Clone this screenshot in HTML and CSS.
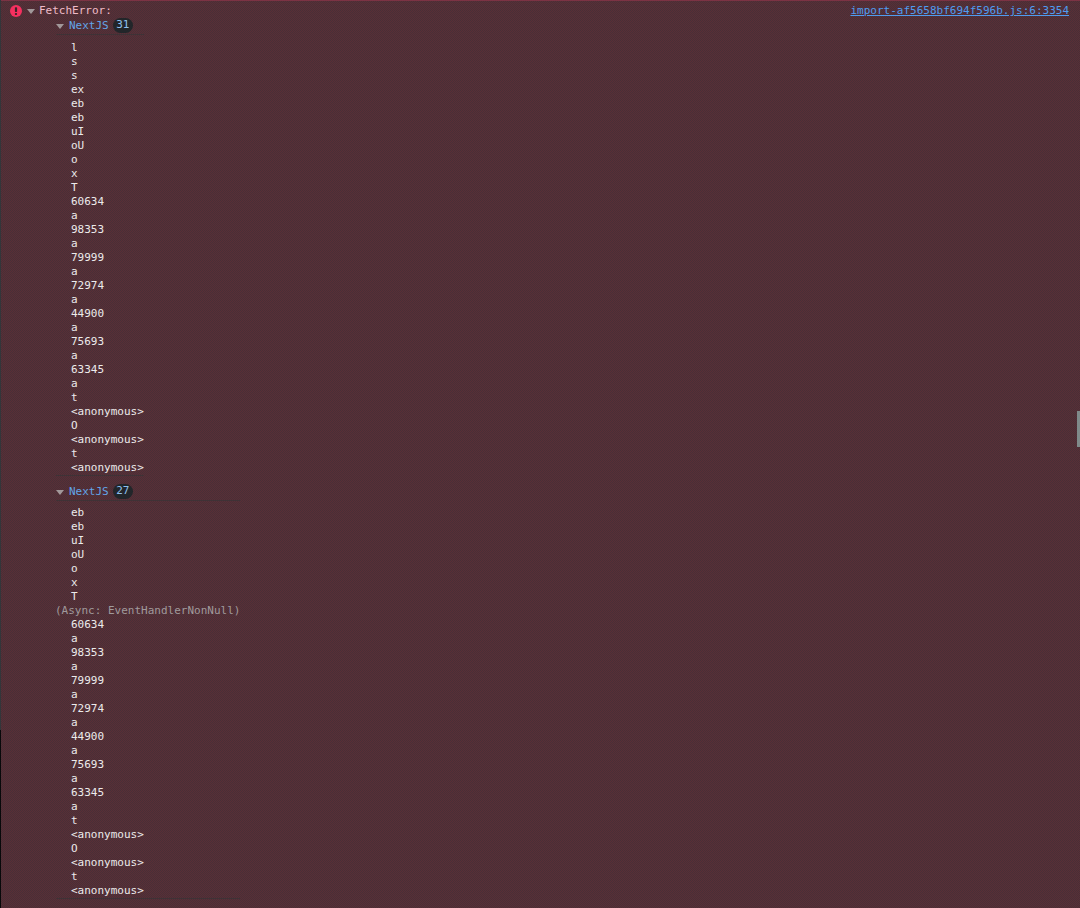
FILE: index.html
```html
<!DOCTYPE html>
<html lang="en">
<head>
<meta charset="utf-8">
<title>Console</title>
<link rel="stylesheet" href="styles.css">
</head>
<body>
<div class="edge"><div class="edge-top"></div><div class="edge-bottom"></div></div>
<main class="console">
  <div class="message">
    <svg class="err" width="12" height="12" viewBox="0 0 12 12"><circle cx="6" cy="6" r="6" fill="#f5305f"/><rect x="4.9" y="2.2" width="2.2" height="4.8" rx=".7" fill="#3c2429"/><rect x="4.9" y="7.9" width="2.2" height="2.1" rx=".8" fill="#3c2429"/></svg>
    <span class="tri"></span>
    <span class="title">FetchError:</span>
    <a class="source">import-af5658bf694f596b.js:6:3354</a>
  </div>
  <section class="group">
    <div class="head"><span class="tri"></span><span class="name">NextJS</span><span class="badge">31</span></div>
    <div class="rows">
      <div>l</div><div>s</div><div>s</div><div>ex</div><div>eb</div><div>eb</div><div>uI</div><div>oU</div><div>o</div><div>x</div><div>T</div>
      <div>60634</div><div>a</div><div>98353</div><div>a</div><div>79999</div><div>a</div><div>72974</div><div>a</div><div>44900</div><div>a</div><div>75693</div><div>a</div><div>63345</div><div>a</div><div>t</div>
      <div>&lt;anonymous&gt;</div><div>O</div><div>&lt;anonymous&gt;</div><div>t</div><div>&lt;anonymous&gt;</div>
    </div>
  </section>
  <section class="group second">
    <div class="head"><span class="tri"></span><span class="name">NextJS</span><span class="badge">27</span></div>
    <div class="rows">
      <div>eb</div><div>eb</div><div>uI</div><div>oU</div><div>o</div><div>x</div><div>T</div>
      <div class="async">(Async: EventHandlerNonNull)</div>
      <div>60634</div><div>a</div><div>98353</div><div>a</div><div>79999</div><div>a</div><div>72974</div><div>a</div><div>44900</div><div>a</div><div>75693</div><div>a</div><div>63345</div><div>a</div><div>t</div>
      <div>&lt;anonymous&gt;</div><div>O</div><div>&lt;anonymous&gt;</div><div>t</div><div>&lt;anonymous&gt;</div>
    </div>
  </section>
</main>
<div class="thumb"></div>
</body>
</html>
```
FILE: styles.css
```css
html, body {
  margin: 0;
  height: 908px;
  overflow: hidden;
}
body {
  background: repeating-conic-gradient(#5a2f36 0 25%, #482f37 0 50%) 0 0 / 2px 2px;
  font-family: "DejaVu Sans Mono", monospace;
  font-size: 11px;
  line-height: 14px;
  color: #ecebeb;
}
.edge {
  position: absolute;
  left: 0;
  top: 0;
  width: 1px;
  height: 908px;
  display: flex;
  flex-direction: column;
}
.edge-top { height: 730px; background: #33363a; }
.edge-bottom { flex: 1; background: #08090a; }
.console {
  border-top: 1px solid #7b3344;
  padding: 3px 11px 0 56px;
  display: flex;
  flex-direction: column;
  align-items: flex-start;
}
.message {
  position: relative;
  align-self: stretch;
  height: 14px;
  display: flex;
  align-items: center;
  margin-left: -29px;
}
.err {
  position: absolute;
  left: -17px;
  top: 1px;
}
.tri {
  width: 0;
  height: 0;
  border-left: 4.5px solid transparent;
  border-right: 4.5px solid transparent;
  border-top: 5px solid #a2989a;
  margin-right: 4px;
  flex: none;
}
.head .tri { margin-right: 5px; }
.title { color: #f0bcc8; }
.source {
  margin-left: auto;
  color: #4f9cf0;
  text-decoration: underline;
}
.group {
  display: flex;
  flex-direction: column;
}
.head {
  height: 16px;
  display: flex;
  align-items: center;
  border-bottom: 1px solid #3f3236;
}
.name { color: #62a5e8; }
.badge {
  align-self: flex-start;
  margin-left: 4px;
  min-width: 20px;
  height: 15px;
  line-height: 14px;
  text-align: center;
  border-radius: 8px;
  background: #22262a;
  color: #8fc0ee;
}
.rows {
  padding-top: 6px;
  border-bottom: 1px solid #3f3236;
}
.second .rows { padding-top: 5px; }
.rows div { padding-left: 15px; height: 14px; }
.rows .async { padding-left: 0; margin-left: -1px; color: #a09a9c; }
.second { margin-top: 8px; }
.thumb {
  position: absolute;
  left: 1077px;
  top: 411px;
  width: 3px;
  height: 36px;
  background: #7f8a8a;
}
```
